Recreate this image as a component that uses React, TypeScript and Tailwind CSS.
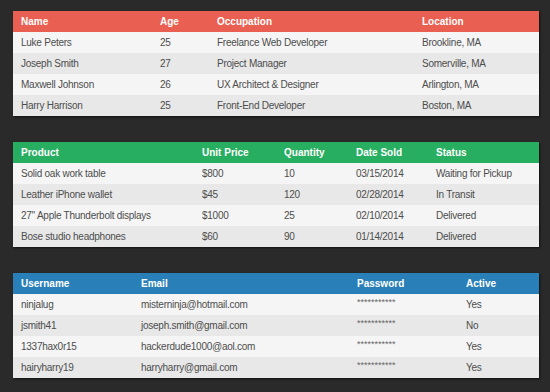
const people = [
  ["Luke Peters", "25", "Freelance Web Developer", "Brookline, MA"],
  ["Joseph Smith", "27", "Project Manager", "Somerville, MA"],
  ["Maxwell Johnson", "26", "UX Architect & Designer", "Arlington, MA"],
  ["Harry Harrison", "25", "Front-End Developer", "Boston, MA"],
]

const products = [
  ["Solid oak work table", "$800", "10", "03/15/2014", "Waiting for Pickup"],
  ["Leather iPhone wallet", "$45", "120", "02/28/2014", "In Transit"],
  ['27" Apple Thunderbolt displays', "$1000", "25", "02/10/2014", "Delivered"],
  ["Bose studio headphones", "$60", "90", "01/14/2014", "Delivered"],
]

const users = [
  ["ninjalug", "misterninja@hotmail.com", "***********", "Yes"],
  ["jsmith41", "joseph.smith@gmail.com", "***********", "No"],
  ["1337hax0r15", "hackerdude1000@aol.com", "***********", "Yes"],
  ["hairyharry19", "harryharry@gmail.com", "***********", "Yes"],
]

function DataTable({
  head,
  widths,
  rows,
  headBg,
  pwCol,
}: {
  head: string[]
  widths: string[]
  rows: string[][]
  headBg: string
  pwCol?: number
}) {
  return (
    <table className="w-[526px] table-fixed border-collapse shadow-[1px_1px_2px_rgba(0,0,0,0.6)]">
      <colgroup>
        {widths.map((w, i) => (
          <col key={i} className={w} />
        ))}
      </colgroup>
      <thead>
        <tr className={headBg}>
          {head.map((h) => (
            <th key={h} className="h-[21px] px-2 p-0 text-left text-[10px] font-bold text-white">
              {h}
            </th>
          ))}
        </tr>
      </thead>
      <tbody>
        {rows.map((r, i) => (
          <tr key={i} className={i % 2 === 0 ? "bg-[#f5f5f5]" : "bg-[#e8e8e8]"}>
            {r.map((c, j) =>
              j === pwCol ? (
                <td key={j} className="h-[21px] px-2 p-0 align-top pt-[4px] text-[9px] leading-none text-[#666]">
                  {c}
                </td>
              ) : (
                <td key={j} className="h-[21px] px-2 p-0 text-[10px] tracking-[-0.25px] text-[#4d4d4d]">
                  {c}
                </td>
              )
            )}
          </tr>
        ))}
      </tbody>
    </table>
  )
}

export default function App() {
  return (
    <main className="w-[550px] h-[392px] bg-[#2a2a2a] pl-[13px] pt-[11px] flex flex-col gap-[26px] font-['Liberation_Sans',Arial,sans-serif]">
      <DataTable
        head={["Name", "Age", "Occupation", "Location"]}
        widths={["w-[139px]", "w-[57px]", "w-[205px]", "w-[125px]"]}
        rows={people}
        headBg="bg-[#e95f51]"
      />
      <DataTable
        head={["Product", "Unit Price", "Quantity", "Date Sold", "Status"]}
        widths={["w-[181px]", "w-[82px]", "w-[72px]", "w-[80px]", "w-[111px]"]}
        rows={products}
        headBg="bg-[#27ae60]"
      />
      <DataTable
        head={["Username", "Email", "Password", "Active"]}
        widths={["w-[120px]", "w-[216px]", "w-[109px]", "w-[81px]"]}
        rows={users}
        headBg="bg-[#2980b9]"
        pwCol={2}
      />
    </main>
  )
}
